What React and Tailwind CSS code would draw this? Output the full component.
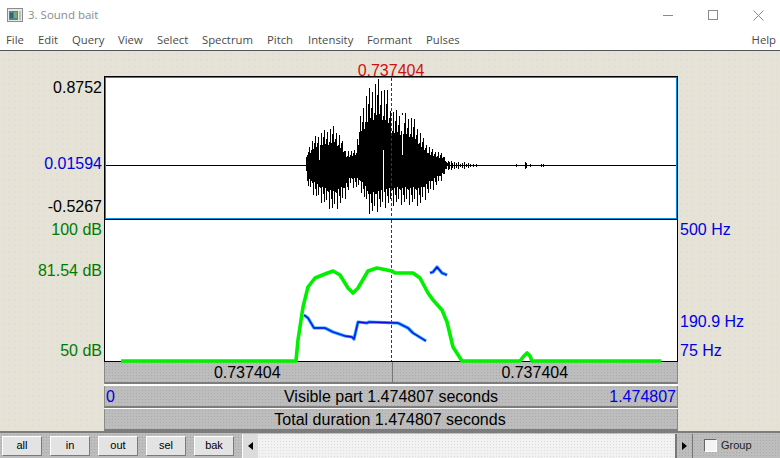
// Praat-style "Sound bait" editor window
const MENU_LEFT = [
  ['File', 6], ['Edit', 38], ['Query', 72], ['View', 118], ['Select', 157],
  ['Spectrum', 202], ['Pitch', 267], ['Intensity', 308], ['Formant', 367], ['Pulses', 426],
]

// envelope of the waveform, page coordinates
const UPPER = [[305,165],[307,148],[313,138],[323,130],[333,126],[340,135],[345,149],[350,152],[356,146],[361,108],[367,90],[377,78],[387,90],[391,110],[400,110],[413,117],[423,138],[430,148],[443,154],[447,163]]
const LOWER = [[305,165],[307,187],[317,200],[333,212],[343,204],[350,187],[360,190],[367,208],[370,217],[378,211],[390,206],[407,205],[420,206],[430,193],[442,180],[447,167]]

const GREEN = [[121,361],[296,361],[298,340],[303,307],[308,287],[315,278],[325,274],[333,271],[340,275],[348,288],[353,293],[358,288],[368,271],[377,268],[392,271],[395,273],[413,273],[420,278],[428,293],[433,300],[442,310],[447,322],[453,347],[462,361],[520,361],[523,357],[527,353],[530,356],[532,361],[661,361]]
const PITCH_A = [[304,315],[308,318],[314,328],[325,328],[333,332],[345,336],[352,337],[354,339],[358,322],[367,323],[369,322],[398,323],[408,328],[413,333],[426,341]]
const PITCH_B = [[430,273],[433,272],[437,267],[442,273],[447,275]]

function interp(points, x) {
  for (let i = 1; i < points.length; i++) {
    const [x0, y0] = points[i - 1]
    const [x1, y1] = points[i]
    if (x <= x1) return y0 + ((y1 - y0) * (x - x0)) / (x1 - x0)
  }
  return points[points.length - 1][1]
}

const toPoints = pts => pts.map(p => p.join(',')).join(' ')

function waveformPath() {
  // teeth around a solid core, roughly one per pitch period
  const upPattern = [1, 0.6, 0.72, 0.9, 0.55, 0.62, 0.96, 0.58, 0.8]
  const downPattern = [0.62, 1, 0.56, 0.74, 0.92, 0.55, 0.84, 0.6]
  let d = ''
  for (let x = 305; x <= 447; x++) {
    const top = 165 - (165 - interp(UPPER, x)) * upPattern[x % 9]
    const bottom = 165 + (interp(LOWER, x) - 165) * downPattern[x % 8]
    d += `M${x + 0.5} ${Math.round(top)}V${Math.round(bottom)}`
  }
  return d
}

// quiet tail after the vowel
const NOISE = [[448,4],[449,3],[451,4],[452,2],[454,3],[456,2],[458,3],[460,1],[462,2],[464,3],[466,1],[468,2],[470,1],[473,1],[476,1],[516,1],[525,3],[526,2],[530,1],[541,1],[543,1]]

function Waveform() {
  return (
    <svg viewBox="106 78 570 140" className="block h-full w-full" shapeRendering="crispEdges">
      <line x1="106" x2="676" y1="165.5" y2="165.5" stroke="#000" strokeWidth="1" />
      <path d={waveformPath()} stroke="#000" strokeWidth="1" fill="none" />
      {NOISE.map(([x, a]) => (
        <line key={x} x1={x + 0.5} x2={x + 0.5} y1={165 - a} y2={166 + a} stroke="#000" strokeWidth="1" />
      ))}
      <line x1="319.5" x2="319.5" y1="130" y2="160" stroke="#fff" strokeWidth="1" />
      <line x1="383.5" x2="383.5" y1="150" y2="205" stroke="#fff" strokeWidth="1" />
      <line x1="402.5" x2="402.5" y1="115" y2="155" stroke="#fff" strokeWidth="1" />
      <line x1="391.5" x2="391.5" y1="78" y2="218" stroke="#c00000" strokeWidth="1" strokeDasharray="3 2" />
    </svg>
  )
}

function Curves() {
  return (
    <svg viewBox="105 220 572 141" className="block h-full w-full overflow-visible">
      <line x1="391.5" x2="391.5" y1="220" y2="361" stroke="#c00000" strokeWidth="1" strokeDasharray="3 2" />
      {[PITCH_A, PITCH_B].map((pts, i) => (
        <g key={i} fill="none" strokeLinejoin="round">
          <polyline points={toPoints(pts)} stroke="#1e9bff" strokeWidth="3.2" />
          <polyline points={toPoints(pts)} stroke="#0a10e0" strokeWidth="1.3" />
        </g>
      ))}
      <polyline points={toPoints(GREEN)} stroke="#00f000" strokeWidth="3.6" fill="none" strokeLinejoin="round" />
    </svg>
  )
}

function Btn({ children }) {
  return (
    <div className="flex h-[20px] w-[40px] items-center justify-center border border-t-white border-l-white border-r-[#7a7a7a] border-b-[#7a7a7a] bg-[#e3e3e3] text-[11px] text-black">
      {children}
    </div>
  )
}

function BarRow({ className = '', children }) {
  return (
    <div className={`border-b-2 border-b-[#7d7d7d] bg-[#bdbdbd] bg-[radial-gradient(#aaaaaa_0.5px,transparent_0.7px)] bg-[length:3px_3px] pt-[1px] text-[16px] leading-[20px] text-black ${className}`}>
      {children}
    </div>
  )
}

function AxisLabel({ top, color, children }) {
  return (
    <div className={`h-[18px] leading-[18px] ${color}`} style={{ marginTop: top }}>
      {children}
    </div>
  )
}

export default function App() {
  return (
    <div className="flex h-[458px] w-[780px] flex-col overflow-hidden bg-white font-['Liberation_Sans',sans-serif]">
      {/* title bar */}
      <div className="flex h-[30px] items-center bg-white pl-[7px]">
        <svg width="16" height="14" viewBox="0 0 16 14" className="shrink-0">
          <rect x="0.5" y="0.5" width="15" height="13" fill="#e8e8e8" stroke="#8c8c8c" />
          <rect x="2" y="3" width="9" height="9" fill="#4d8a80" />
          <rect x="3" y="5" width="3" height="5" fill="#2d5f8a" />
          <rect x="7" y="4" width="3" height="6" fill="#7fa86a" />
          <rect x="12" y="3" width="2" height="9" fill="#bdbdbd" />
        </svg>
        <span className="ml-[5px] font-['Open_Sans',sans-serif] text-[11.5px] text-[#8b8b8b]">3. Sound bait</span>
        <div className="ml-auto flex items-center">
          <div className="h-px w-[10px] bg-[#8a8a8a]" />
          <div className="ml-[35px] h-[10px] w-[10px] border border-[#8a8a8a]" />
          <svg width="11" height="11" viewBox="0 0 11 11" className="mr-[16px] ml-[35px]">
            <path d="M0.5 0.5 10.5 10.5M10.5 0.5 0.5 10.5" stroke="#8a8a8a" strokeWidth="1" />
          </svg>
        </div>
      </div>

      {/* menu */}
      <div className="relative h-[21px] border-b border-b-[#555] bg-white font-['Open_Sans',sans-serif] text-[11.3px] leading-[20px] text-[#4a4a4a]">
        {MENU_LEFT.map(([label, x]) => (
          <span key={label} className="absolute top-0" style={{ left: x }}>{label}</span>
        ))}
        <span className="absolute top-0 right-[4px]">Help</span>
      </div>

      {/* main area */}
      <div className="flex h-[380px] bg-[#e4e3d5] bg-[radial-gradient(#ecc9e6_0.5px,transparent_0.8px)] bg-[length:6px_6px] text-[16px]">
        <div className="w-[104px] pr-[2px] text-right">
          <AxisLabel top={28} color="text-black">0.8752</AxisLabel>
          <AxisLabel top={58} color="text-[#0000e0]">0.01594</AxisLabel>
          <AxisLabel top={25} color="text-black">-0.5267</AxisLabel>
          <AxisLabel top={5} color="text-[#007a00]">100 dB</AxisLabel>
          <AxisLabel top={23} color="text-[#007a00]">81.54 dB</AxisLabel>
          <AxisLabel top={62} color="text-[#007a00]">50 dB</AxisLabel>
        </div>

        <div className="flex w-[574px] flex-col">
          <div className="h-[25px] text-center leading-[40px] text-[#d01010]">0.737404</div>
          <div className="relative z-10 h-[144px] border border-black bg-white">
            <div className="h-full border border-[#0090e0]">
              <Waveform />
            </div>
          </div>
          <div className="relative z-10 h-[142px] border-x border-b border-x-black border-b-black bg-white">
            <Curves />
          </div>
          <div className="flex h-[22px] border-x border-x-[#8a8a8a]">
            <BarRow className="flex-1 border-r border-r-[#777] pr-[2px] text-center">0.737404</BarRow>
            <BarRow className="flex-1 text-center">0.737404</BarRow>
          </div>
          <div className="h-[2px] bg-white" />
          <BarRow className="grid h-[22px] grid-cols-[1fr_auto_1fr] border-x border-x-[#8a8a8a] px-[1px]">
            <span className="text-[#0000e0]">0</span>
            <span>Visible part 1.474807 seconds</span>
            <span className="text-right text-[#0000e0]">1.474807</span>
          </BarRow>
          <div className="h-px bg-white" />
          <BarRow className="h-[22px] border-x border-x-[#8a8a8a] pr-[2px] text-center">Total duration 1.474807 seconds</BarRow>
        </div>

        <div className="flex-1 pl-[2px] text-[#0000e0]">
          <AxisLabel top={170} color="">500 Hz</AxisLabel>
          <AxisLabel top={74} color="">190.9 Hz</AxisLabel>
          <AxisLabel top={11} color="">75 Hz</AxisLabel>
        </div>
      </div>

      {/* bottom toolbar */}
      <div className="flex h-[27px] items-center border-t-2 border-t-[#7d7d7d] bg-[#bdbdbd] bg-[radial-gradient(#aaaaaa_0.5px,transparent_0.7px)] bg-[length:3px_3px] pl-[2px] text-[11px]">
        <div className="flex gap-[8px]">
          <Btn>all</Btn>
          <Btn>in</Btn>
          <Btn>out</Btn>
          <Btn>sel</Btn>
          <Btn>bak</Btn>
        </div>
        <div className="ml-[8px] flex h-[24px] w-[451px] items-center">
          <div className="flex h-full w-[16px] items-center justify-center border-l border-l-white bg-[#dcdcdc] text-[#000]">
            <svg width="5" height="8" viewBox="0 0 5 8"><path d="M5 0V8L0 4Z" fill="#000" /></svg>
          </div>
          <div className="h-full flex-1 border-r-2 border-r-[#777] bg-[#f2f2f2] bg-[radial-gradient(#dcdcdc_0.5px,transparent_0.7px)] bg-[length:3px_3px]" />
          <div className="flex h-full w-[16px] items-center justify-center border-r border-r-[#777]">
            <svg width="5" height="8" viewBox="0 0 5 8"><path d="M0 0V8L5 4Z" fill="#000" /></svg>
          </div>
        </div>
        <div className="ml-[11px] h-[13px] w-[13px] border border-t-[#666] border-l-[#666] border-r-white border-b-white bg-[#f4f4f4]" />
        <span className="ml-[4px] text-[#222]">Group</span>
      </div>
    </div>
  )
}
